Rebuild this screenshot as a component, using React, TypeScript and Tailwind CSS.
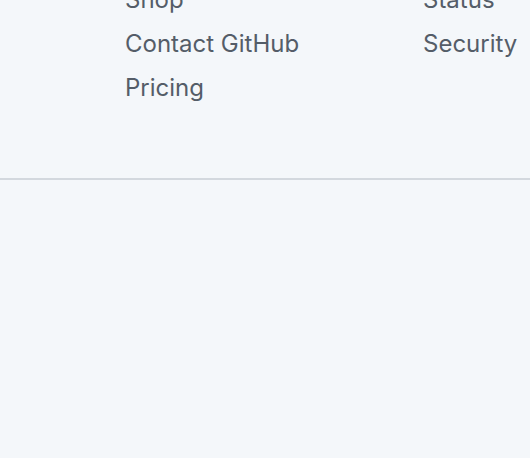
export default function App() {
  const left = ["Shop", "Contact GitHub", "Pricing"];
  const right = ["Status", "Security"];

  return (
    <div
      className="min-h-[458px] w-full bg-[#f4f7fa] overflow-hidden"
      style={{ fontFamily: "Inter, 'Liberation Sans', sans-serif" }}
    >
      {/* link columns */}
      <div className="-mt-[22px] flex pl-[125px] pb-[68px] text-[24px] leading-[44px] text-[#545d68]">
        <ul className="w-[298px]">
          {left.map((l) => (
            <li key={l}>{l}</li>
          ))}
        </ul>
        <ul>
          {right.map((l) => (
            <li key={l}>{l}</li>
          ))}
        </ul>
      </div>
      <div className="h-[2px] bg-[#d3d8de]" />
    </div>
  );
}
